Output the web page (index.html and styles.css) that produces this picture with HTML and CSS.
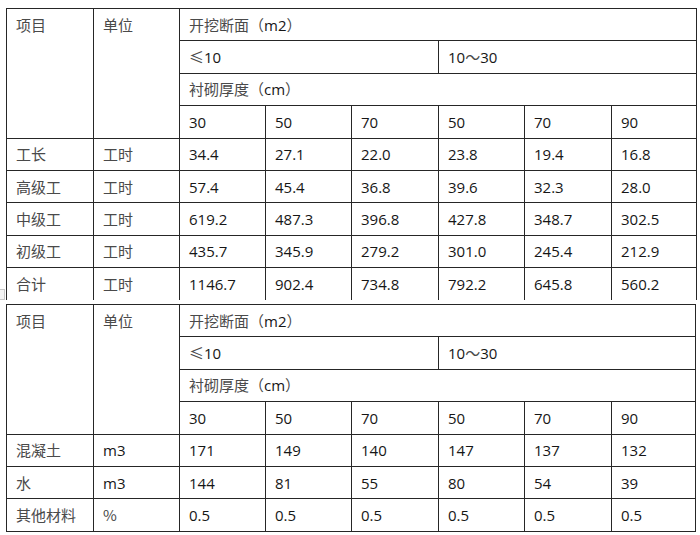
FILE: index.html
```html
<!DOCTYPE html>
<html lang="zh">
<head>
<meta charset="utf-8">
<link rel="stylesheet" href="styles.css">
</head>
<body>
<div class="page">
  <table class="grid first">
    <colgroup>
      <col class="c87"><col class="c86"><col class="c86"><col class="c86"><col class="c87"><col class="c86"><col class="c87"><col class="c85">
    </colgroup>
    <tr>
      <td rowspan="4" class="cj top">项目</td>
      <td rowspan="4" class="cj top">单位</td>
      <td colspan="6" class="cj">开挖断面（<span class="lt">m2</span>）</td>
    </tr>
    <tr>
      <td colspan="3"><span class="cj">≤</span><span class="lt">10</span></td>
      <td colspan="3"><span class="lt">10</span><span class="cj">～</span><span class="lt">30</span></td>
    </tr>
    <tr>
      <td colspan="6" class="cj">衬砌厚度（<span class="lt">cm</span>）</td>
    </tr>
    <tr class="lt">
      <td>30</td><td>50</td><td>70</td><td>50</td><td>70</td><td>90</td>
    </tr>
    <tr>
      <td class="cj">工长</td><td class="cj">工时</td>
      <td class="lt">34.4</td><td class="lt">27.1</td><td class="lt">22.0</td><td class="lt">23.8</td><td class="lt">19.4</td><td class="lt">16.8</td>
    </tr>
    <tr>
      <td class="cj">高级工</td><td class="cj">工时</td>
      <td class="lt">57.4</td><td class="lt">45.4</td><td class="lt">36.8</td><td class="lt">39.6</td><td class="lt">32.3</td><td class="lt">28.0</td>
    </tr>
    <tr>
      <td class="cj">中级工</td><td class="cj">工时</td>
      <td class="lt">619.2</td><td class="lt">487.3</td><td class="lt">396.8</td><td class="lt">427.8</td><td class="lt">348.7</td><td class="lt">302.5</td>
    </tr>
    <tr>
      <td class="cj">初级工</td><td class="cj">工时</td>
      <td class="lt">435.7</td><td class="lt">345.9</td><td class="lt">279.2</td><td class="lt">301.0</td><td class="lt">245.4</td><td class="lt">212.9</td>
    </tr>
    <tr class="last">
      <td class="cj">合计</td><td class="cj">工时</td>
      <td class="lt">1146.7</td><td class="lt">902.4</td><td class="lt">734.8</td><td class="lt">792.2</td><td class="lt">645.8</td><td class="lt">560.2</td>
    </tr>
  </table>
  <span class="handle"></span>
  <table class="grid second">
    <colgroup>
      <col class="c87"><col class="c86"><col class="c86"><col class="c86"><col class="c87"><col class="c86"><col class="c87"><col class="c84">
    </colgroup>
    <tr>
      <td rowspan="4" class="cj top">项目</td>
      <td rowspan="4" class="cj top">单位</td>
      <td colspan="6" class="cj">开挖断面（<span class="lt">m2</span>）</td>
    </tr>
    <tr>
      <td colspan="3"><span class="cj">≤</span><span class="lt">10</span></td>
      <td colspan="3"><span class="lt">10</span><span class="cj">～</span><span class="lt">30</span></td>
    </tr>
    <tr>
      <td colspan="6" class="cj">衬砌厚度（<span class="lt">cm</span>）</td>
    </tr>
    <tr class="lt">
      <td>30</td><td>50</td><td>70</td><td>50</td><td>70</td><td>90</td>
    </tr>
    <tr>
      <td class="cj">混凝土</td><td class="lt">m3</td>
      <td class="lt">171</td><td class="lt">149</td><td class="lt">140</td><td class="lt">147</td><td class="lt">137</td><td class="lt">132</td>
    </tr>
    <tr>
      <td class="cj">水</td><td class="lt">m3</td>
      <td class="lt">144</td><td class="lt">81</td><td class="lt">55</td><td class="lt">80</td><td class="lt">54</td><td class="lt">39</td>
    </tr>
    <tr>
      <td class="cj">其他材料</td><td class="cj">%</td>
      <td class="lt">0.5</td><td class="lt">0.5</td><td class="lt">0.5</td><td class="lt">0.5</td><td class="lt">0.5</td><td class="lt">0.5</td>
    </tr>
  </table>
</div>
</body>
</html>
```

FILE: styles.css
```css
html, body {
  margin: 0;
  padding: 0;
  background: #ffffff;
}

.page {
  position: relative;
  padding: 8px 0 0 6px;
}

.grid {
  border-collapse: collapse;
  table-layout: fixed;
  width: 690px;
}

.second {
  width: 689px;
  margin-top: 4px;
}

.c87 { width: 87px; }
.c86 { width: 86px; }
.c85 { width: 85px; }
.c84 { width: 84px; }

.grid td {
  border: 1px solid #262626;
  height: 32.4px;
  padding: 0 4px 0 9px;
  box-sizing: border-box;
  vertical-align: middle;
  white-space: nowrap;
  line-height: 20px;
}

.grid tr.last td {
  border-bottom: none;
}

.grid td.top {
  vertical-align: top;
  padding-top: 6px;
}

.cj {
  font-family: "Noto Sans CJK SC", "Noto Sans", sans-serif;
  font-size: 15px;
  color: #4a4a4a;
}

.lt {
  font-family: "Open Sans", "DejaVu Sans", sans-serif;
  font-size: 15px;
  color: #161616;
}

.handle {
  position: absolute;
  left: 0;
  top: 289px;
  width: 4px;
  height: 9px;
  border: 1px solid #c8c8c8;
  border-left: none;
  background: #f4f4f4;
}
```
